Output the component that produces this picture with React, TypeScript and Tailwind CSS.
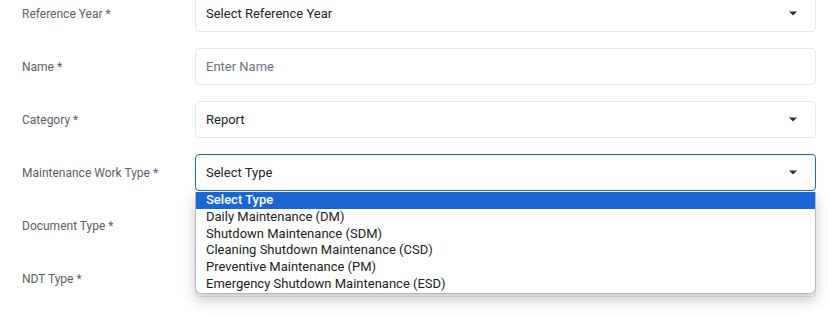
import React from "react";

const Caret = () => (
  <svg width="8" height="5" viewBox="0 0 8 5" className="shrink-0">
    <path d="M0 0.5 H8 L4 4.5 Z" fill="#2a2f36" />
  </svg>
);

type Row = { label: string; kind: "select" | "input"; value: string; placeholder?: boolean; focused?: boolean };

const rows: Row[] = [
  { label: "Reference Year *", kind: "select", value: "Select Reference Year" },
  { label: "Name *", kind: "input", value: "Enter Name", placeholder: true },
  { label: "Category *", kind: "select", value: "Report" },
  { label: "Maintenance Work Type *", kind: "select", value: "Select Type", focused: true },
  { label: "Document Type *", kind: "select", value: "" },
  { label: "NDT Type *", kind: "select", value: "" },
];

const options = [
  "Select Type",
  "Daily Maintenance (DM)",
  "Shutdown Maintenance (SDM)",
  "Cleaning Shutdown Maintenance (CSD)",
  "Preventive Maintenance (PM)",
  "Emergency Shutdown Maintenance (ESD)",
];

export default function App() {
  return (
    <div
      className="relative w-[828px] h-[315px] overflow-hidden bg-white"
      style={{ fontFamily: "Roboto, 'Liberation Sans', sans-serif" }}
    >
      <div className="-mt-[5px] flex flex-col gap-[16px] pl-[22px] pr-[12px]">
        {rows.map((r, i) => (
          <div key={i} className="flex items-center h-[37px]">
            <div className="w-[173px] text-[12px] text-[#5a5f66]">{r.label}</div>
            <div
              className={
                "flex-1 h-full flex items-center justify-between pl-[10px] pr-[18px] rounded-[4px] bg-white border " +
                (r.focused ? "border-[#1e63d6]" : "border-[#e6e8ea]")
              }
            >
              <span className={"text-[13px] " + (r.placeholder ? "text-[#6c737b]" : "text-[#212529]")}>
                {r.value}
              </span>
              {r.kind === "select" && <Caret />}
            </div>
          </div>
        ))}
      </div>
      <div className="absolute left-[195px] top-[192px] w-[621px] bg-white rounded-b-[6px] border border-[#b8b8b8] border-t-0 shadow-[0_6px_14px_rgba(0,0,0,0.22)] overflow-hidden">
        {options.map((o, i) => (
          <div
            key={i}
            className={
              "h-[16.8px] leading-[16.8px] pl-[10px] text-[13px] " +
              (i === 0 ? "bg-[#1a66d2] text-white font-medium" : "text-[#222]")
            }
          >
            {o}
          </div>
        ))}
      </div>
    </div>
  );
}
